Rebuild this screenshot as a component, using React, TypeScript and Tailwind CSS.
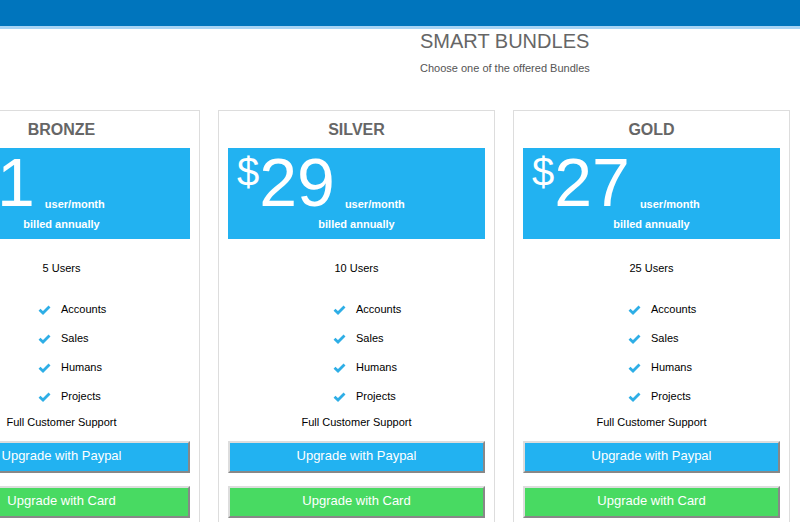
import React from "react";

const bundles = [
  { name: "BRONZE", price: "11", users: "5 Users" },
  { name: "SILVER", price: "29", users: "10 Users" },
  { name: "GOLD", price: "27", users: "25 Users" },
];

const features = ["Accounts", "Sales", "Humans", "Projects"];

const Check = () => (
  <svg width="13" height="10" viewBox="0 0 13 10" className="shrink-0">
    <polyline
      points="1.5,4.8 5,8 11.5,1.5"
      fill="none"
      stroke="#2eaee6"
      strokeWidth="2.8"
      strokeLinecap="butt"
      strokeLinejoin="miter"
    />
  </svg>
);

const BundleCard: React.FC<{ name: string; price: string; users: string }> = ({ name, price, users }) => {
  return (
    <div className="w-[277px] shrink-0 border border-[#dddddd] bg-white pt-[9px] pb-4 h-[440px]">
      <h3 className="text-center text-[16px] leading-[20px] font-bold text-[#666666]">{name}</h3>
      <div className="mx-[9px] mt-[8px] h-[91px] bg-[#22b2f1] text-white">
        <div className="flex items-start pl-[9px] h-[68px] whitespace-nowrap">
          <span className="text-[40px] leading-none mt-[4px]">$</span>
          <span className="text-[68px] leading-none">{price}</span>
          <span className="text-[11px] leading-none font-bold ml-[10px] mt-[51px]">user/month</span>
        </div>
        <div className="mt-[3px] text-center text-[11px] leading-none font-bold">billed annually</div>
      </div>
      <div className="mt-[21px] text-center text-[11px] leading-[16px] text-black">{users}</div>
      <ul className="mt-[19px] pl-[114px]">
        {features.map((f) => (
          <li key={f} className="flex items-center h-[29px] gap-[10px] text-[11px] text-black">
            <Check />
            <span>{f}</span>
          </li>
        ))}
      </ul>
      <div className="mt-[3px] text-center text-[11px] leading-[16px] text-black">Full Customer Support</div>
      <div className="mx-[9px] mt-[11px] flex flex-col gap-[13px]">
        <button className="h-[32px] w-full pb-[2px] border-2 border-t-[#dddddd] border-l-[#dddddd] border-b-[#888888] border-r-[#888888] bg-[#22b2f1] text-white text-[13px]">
          Upgrade with Paypal
        </button>
        <button className="h-[32px] w-full pb-[2px] border-2 border-t-[#dddddd] border-l-[#dddddd] border-b-[#888888] border-r-[#888888] bg-[#48da62] text-white text-[13px]">
          Upgrade with Card
        </button>
      </div>
    </div>
  );
};

export default function App() {
  return (
    <div className="w-[800px] h-[522px] overflow-hidden bg-white" style={{ fontFamily: '"Liberation Sans", Arial, sans-serif' }}>
      <div className="h-[29px] bg-[#0075bd] border-b-[3px] border-[#a6d4f5]" />
      <div className="pl-[420px]">
        <h1 className="mt-[2px] text-[20px] leading-none text-[#666666]">SMART BUNDLES</h1>
        <p className="mt-[12px] text-[11px] leading-none text-[#555555]">Choose one of the offered Bundles</p>
      </div>
      <div className="mt-[36px] ml-[-77px] flex gap-[18px]">
        {bundles.map((b) => (
          <BundleCard key={b.name} {...b} />
        ))}
      </div>
    </div>
  );
}
